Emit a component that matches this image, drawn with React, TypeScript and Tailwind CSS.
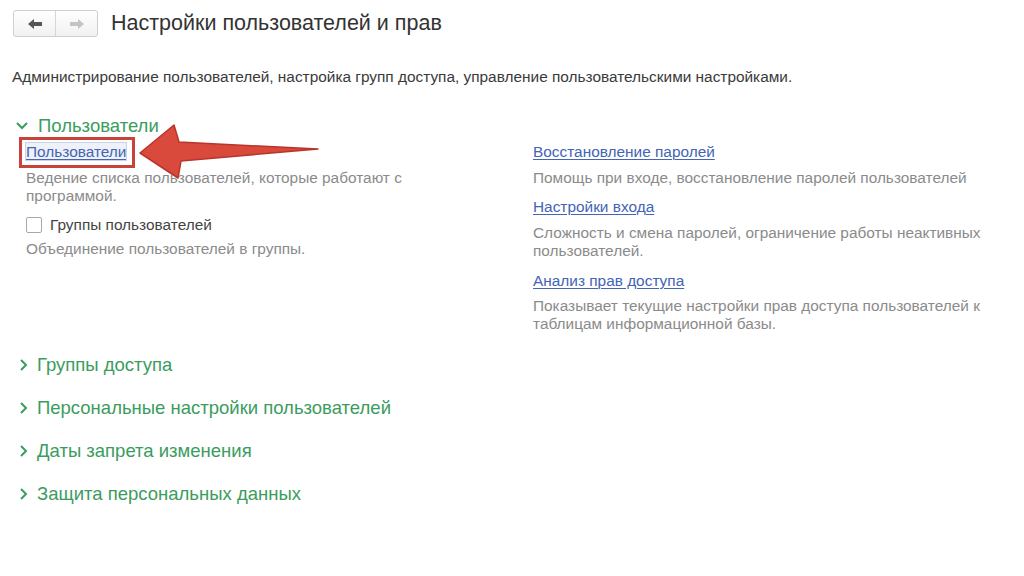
import React from "react";

const GREEN = "text-[#3b9c60]";

function ChevronDown() {
  return (
    <svg width="14" height="10" viewBox="0 0 14 10" className="shrink-0">
      <polyline points="2,2 7,7 12,2" fill="none" stroke="#3b9c60" strokeWidth="2" />
    </svg>
  );
}

function ChevronRight() {
  return (
    <svg width="10" height="14" viewBox="0 0 10 14" className="shrink-0">
      <polyline points="2,2 7,7 2,12" fill="none" stroke="#3b9c60" strokeWidth="2" />
    </svg>
  );
}

function NavArrow({ dir, color }: { dir: "left" | "right"; color: string }) {
  return (
    <svg width="16" height="12" viewBox="0 0 16 12" style={{ transform: dir === "right" ? "scaleX(-1)" : undefined }}>
      <polygon points="1,6 7,1 7,4 15,4 15,8 7,8 7,11" fill={color} />
    </svg>
  );
}

function Link({ children }: { children: React.ReactNode }) {
  return (
    <span className="text-[#4464b4] underline decoration-1 underline-offset-2 text-[15.4px] leading-[18px]">
      {children}
    </span>
  );
}

function LinkRow({ children, className = "" }: { children: React.ReactNode; className?: string }) {
  return (
    <div className={`h-[18px] leading-[18px] ${className}`}>
      <Link>{children}</Link>
    </div>
  );
}

function Desc({ children, className = "" }: { children: React.ReactNode; className?: string }) {
  return <p className={`text-[#8b8b8b] text-[15.4px] leading-[18px] ${className}`}>{children}</p>;
}

function Collapsed({ title }: { title: string }) {
  return (
    <div className="flex items-center h-[22px] pl-[19px]">
      <ChevronRight />
      <span className={`${GREEN} text-[18.5px] leading-[22px] ml-[8px]`}>{title}</span>
    </div>
  );
}

export default function App() {
  return (
    <div
      className="w-[1024px] h-[576px] bg-white overflow-hidden relative"
      style={{ fontFamily: '"Liberation Sans", Arial, sans-serif' }}
    >
      {/* header */}
      <div className="flex items-center pt-[10px] pl-[13px]">
        <div className="flex h-[27px] border border-[#cfcfcf] rounded-[3px] overflow-hidden bg-gradient-to-b from-white to-[#f1f1f1]">
          <div className="w-[42px] flex items-center justify-center border-r border-[#d6d6d6]">
            <NavArrow dir="left" color="#555" />
          </div>
          <div className="w-[41px] flex items-center justify-center">
            <NavArrow dir="right" color="#c4c4c4" />
          </div>
        </div>
        <h1 className="ml-[13px] text-[21.5px] leading-[27px] text-[#333]">Настройки пользователей и прав</h1>
      </div>

      {/* description */}
      <p className="mt-[32px] pl-[12px] text-[15.4px] leading-[16px] text-[#3a3a3a]">
        Администрирование пользователей, настройка групп доступа, управление пользовательскими настройками.
      </p>

      {/* expanded section */}
      <div className="mt-[30px]">
        <div className="flex items-center h-[22px] pl-[15px]">
          <ChevronDown />
          <span className={`${GREEN} text-[18.5px] leading-[22px] ml-[9px]`}>Пользователи</span>
        </div>

        <div className="flex pl-[26px] mt-[6px]">
          {/* left column */}
          <div className="w-[507px] shrink-0">
            <div className="relative h-[18px] leading-[18px] w-fit">
              <span className="bg-[#eef2f8] outline outline-1 outline-[#c9d3e6]">
                <Link>Пользователи</Link>
              </span>
              <span className="absolute left-[-7px] right-[-9px] top-[-6px] bottom-[-7px] border-[3px] border-[#c8433a] pointer-events-none" />
            </div>
            <Desc className="mt-[8px] w-[400px]">Ведение списка пользователей, которые работают с программой.</Desc>
            <div className="flex items-center mt-[11px] h-[18px]">
              <span className="w-[16px] h-[16px] border border-[#a8a8a8] rounded-[2px] bg-white" />
              <span className="ml-[8px] text-[15.4px] leading-[18px] text-[#444]">Группы пользователей</span>
            </div>
            <Desc className="mt-[6px]">Объединение пользователей в группы.</Desc>
          </div>

          {/* right column */}
          <div className="w-[470px]">
            <LinkRow>Восстановление паролей</LinkRow>
            <Desc className="mt-[8px]">Помощь при входе, восстановление паролей пользователей</Desc>
            <LinkRow className="mt-[11px]">Настройки входа</LinkRow>
            <Desc className="mt-[8px] w-[455px]">
              Сложность и смена паролей, ограничение работы неактивных пользователей.
            </Desc>
            <LinkRow className="mt-[12px]">Анализ прав доступа</LinkRow>
            <Desc className="mt-[7px] w-[455px]">
              Показывает текущие настройки прав доступа пользователей к таблицам информационной базы.
            </Desc>
          </div>
        </div>
      </div>

      {/* collapsed sections */}
      <div className="mt-[21px] flex flex-col gap-[21px]">
        <Collapsed title="Группы доступа" />
        <Collapsed title="Персональные настройки пользователей" />
        <Collapsed title="Даты запрета изменения" />
        <Collapsed title="Защита персональных данных" />
      </div>

      {/* annotation arrow */}
      <svg className="absolute left-0 top-0 pointer-events-none" width="1024" height="576">
        <polygon
          points="140,153 174,125 179,142 318,149 181,161 178,178"
          fill="#d94a3c"
          stroke="#b8352b"
          strokeWidth="1.5"
          strokeLinejoin="round"
        />
      </svg>
    </div>
  );
}
